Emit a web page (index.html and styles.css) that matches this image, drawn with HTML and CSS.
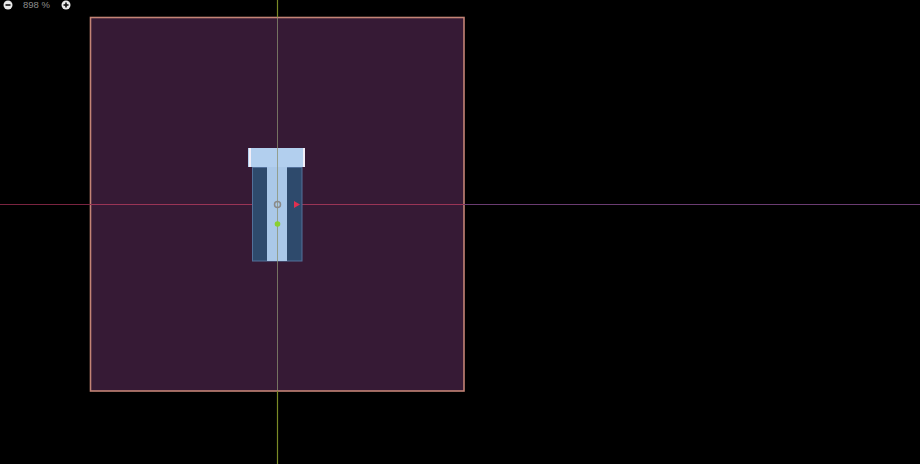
FILE: index.html
```html
<!DOCTYPE html>
<html>
<head>
<meta charset="utf-8">
<link rel="stylesheet" href="styles.css">
</head>
<body>
<div class="viewport">
  <div class="zoombar">
    <svg class="zicon" width="10" height="10" viewBox="0 0 10 10"><circle cx="5" cy="5" r="4.5" fill="#e8e8e8"/><rect x="2.5" y="4.2" width="5" height="1.6" fill="#111"/></svg>
    <span class="zlabel">898 %</span>
    <svg class="zicon plus" width="10" height="10" viewBox="0 0 10 10"><circle cx="5" cy="5" r="4.5" fill="#e8e8e8"/><rect x="2.5" y="4.2" width="5" height="1.6" fill="#111"/><rect x="4.2" y="2.5" width="1.6" height="5" fill="#111"/></svg>
  </div>
  <svg class="scene" width="920" height="464" viewBox="0 0 920 464">
    <rect x="90.5" y="17.5" width="373.5" height="373.5" fill="#361a35" stroke="#c48476" stroke-width="1.6"/>
    <!-- horizontal axis -->
    <line x1="0" y1="204.5" x2="90" y2="204.5" stroke="#7a2440" stroke-width="1"/>
    <line x1="90" y1="204.5" x2="464" y2="204.5" stroke="#9a3456" stroke-width="1"/>
    <line x1="464" y1="204.5" x2="920" y2="204.5" stroke="#6a3c72" stroke-width="1.2"/>
    <!-- sprite body -->
    <rect x="252.5" y="167.5" width="49.5" height="93.5" fill="#2e4a6c" stroke="#52709a" stroke-width="1"/>
    <rect x="267" y="167" width="20" height="94" fill="#aac8e8"/>
    <rect x="248" y="148" width="57" height="19" fill="#b2cfee"/>
    <rect x="249" y="148" width="2" height="19" fill="#f2eef8"/>
    <rect x="303" y="148" width="2" height="19" fill="#f2eef8"/>
    <!-- vertical axis -->
    <line x1="277.5" y1="0" x2="277.5" y2="17" stroke="#7a8a26" stroke-width="1.2"/>
    <line x1="277.5" y1="17" x2="277.5" y2="391" stroke="#8a9070" stroke-width="1" opacity="0.75"/>
    <line x1="277.5" y1="391" x2="277.5" y2="464" stroke="#7a8a26" stroke-width="1.2"/>
    <!-- gizmo -->
    <circle cx="277.5" cy="204.5" r="3" fill="none" stroke="#8a8a8a" stroke-width="1.5"/>
    <polygon points="294,201 300,204.5 294,208" fill="#e03050"/>
    <circle cx="277.5" cy="224" r="2.8" fill="#8ad030"/>
  </svg>
</div>
</body>
</html>
```
FILE: styles.css
```css
html, body {
  margin: 0;
  padding: 0;
  background: #000;
}
.viewport {
  position: relative;
  width: 920px;
  height: 464px;
  overflow: hidden;
  background: #000;
  font-family: "Liberation Sans", Arial, sans-serif;
}
.scene {
  display: block;
}
.zoombar {
  position: absolute;
  left: 3px;
  top: 0;
  height: 10px;
  display: flex;
  align-items: center;
  z-index: 2;
}
.zicon {
  display: block;
}
.zlabel {
  margin-left: 10px;
  width: 38px;
  color: #8c8c8c;
  font-size: 9.5px;
  line-height: 10px;
}
```
